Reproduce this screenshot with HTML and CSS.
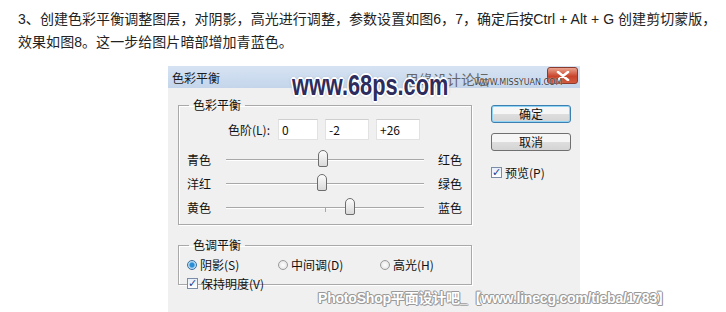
FILE: index.html
```html
<!DOCTYPE html>
<html lang="zh">
<head>
<meta charset="utf-8">
<link rel="stylesheet" href="styles.css">
</head>
<body>
<p class="intro">3、创建色彩平衡调整图层，对阴影，高光进行调整，参数设置如图6，7，确定后按Ctrl + Alt + G 创建剪切蒙版，<br>效果如图8。这一步给图片暗部增加青蓝色。</p>
<div class="dialog">
  <div class="titlebar">
    <span class="title">色彩平衡</span>
    <span class="close"><svg width="14" height="10" viewBox="0 0 14 10"><path d="M2 1 L12 9 M12 1 L2 9" stroke="#fff" stroke-width="2.6" stroke-linecap="round"/></svg></span>
    <span class="wmcn">思缘设计论坛</span>
    <span class="wm68">www.68ps.com</span>
    <span class="wmen">WWW.MISSYUAN.COM</span>
  </div>
  <div class="body">
    <div class="groups">
      <fieldset class="group g1">
        <legend>色彩平衡</legend>
        <div class="levels">
          <span class="lvlabel">色阶(L):</span>
          <span class="field f1">0</span>
          <span class="field f2">-2</span>
          <span class="field f2">+26</span>
        </div>
        <div class="slider">
          <span class="sl-left">青色</span>
          <span class="track"><span class="thumb" style="left:92px"></span></span>
          <span class="sl-right">红色</span>
        </div>
        <div class="slider">
          <span class="sl-left">洋红</span>
          <span class="track"><span class="thumb" style="left:91px"></span></span>
          <span class="sl-right">绿色</span>
        </div>
        <div class="slider">
          <span class="sl-left">黄色</span>
          <span class="track"><span class="tick"></span><span class="thumb" style="left:119px"></span></span>
          <span class="sl-right">蓝色</span>
        </div>
      </fieldset>
      <fieldset class="group g2">
        <legend>色调平衡</legend>
        <div class="radios">
          <span class="opt o1"><span class="radio on"></span>阴影(S)</span>
          <span class="opt o2"><span class="radio"></span>中间调(D)</span>
          <span class="opt o3"><span class="radio"></span>高光(H)</span>
        </div>
        <div class="opt keep"><span class="check">✓</span>保持明度(V)</div>
      </fieldset>
    </div>
    <div class="side">
      <span class="btn ok">确定</span>
      <span class="btn">取消</span>
      <span class="opt preview"><span class="check">✓</span>预览(P)</span>
    </div>
  </div>
  <span class="wmbottom">PhotoShop平面设计吧_【www.linecg.com/tieba/1783】</span>
</div>
</body>
</html>
```
FILE: styles.css
```css
html, body {
  margin: 0;
  padding: 0;
  background: #fff;
  overflow: hidden;
}
body {
  font-family: "Liberation Sans", "Noto Sans CJK SC", sans-serif;
  width: 726px;
  height: 312px;
}
.intro {
  margin: 0;
  padding: 8px 0 0 18px;
  font-size: 14px;
  line-height: 23px;
  color: #222;
  letter-spacing: 0.05px;
}
.dialog {
  position: relative;
  margin: 12px 0 0 168px;
  width: 412px;
  height: 246px;
  background: #f0f0f0;
  font-family: "Noto Sans CJK SC", sans-serif;
  font-size: 12px;
  color: #111;
}
.titlebar {
  position: relative;
  height: 22px;
  background: linear-gradient(#d6e3f3, #c4d5eb);
  display: flex;
  align-items: center;
}
.title {
  padding-left: 4px;
  font-size: 12px;
  color: #1a1a1a;
}
.close {
  position: absolute;
  z-index: 1;
  left: 379px;
  top: 1px;
  width: 31px;
  height: 17px;
  border: 1px solid #8a3b2e;
  border-radius: 3px;
  background: linear-gradient(#eaa490, #c8442c 55%, #d25a3e);
  box-sizing: border-box;
  display: flex;
  align-items: center;
  justify-content: center;
}
.wm68 {
  position: absolute;
  z-index: 2;
  left: 124px;
  top: 3px;
  font-family: "Liberation Sans", sans-serif;
  font-weight: bold;
  font-size: 29px;
  transform: scaleX(0.75);
  transform-origin: left center;
  color: #2d2c5c;
  white-space: nowrap;
  text-shadow: 0 0 2px #fff, 1px 1px 0 #fff, -1px -1px 0 #fff, 1px -1px 0 #fff, -1px 1px 0 #fff, 2px 0 0 #fff, -2px 0 0 #fff, 0 2px 0 #fff, 0 -2px 0 #fff, 0 0 4px #888;
  line-height: 32px;
}
.wmcn {
  position: absolute;
  z-index: 1;
  left: 237px;
  top: 3px;
  font-size: 14px;
  color: #666;
  white-space: nowrap;
}
.wmen {
  position: absolute;
  z-index: 3;
  left: 306px;
  top: 12px;
  font-family: "DejaVu Sans", sans-serif;
  font-size: 8px;
  line-height: 9px;
  color: #3a3a3a;
  white-space: nowrap;
  text-shadow: 0 0 1px #fff;
}
.body {
  display: flex;
  padding: 9px 0 0 10px;
}
.groups {
  display: flex;
  flex-direction: column;
  gap: 12px;
  width: 294px;
}
.group {
  margin: 0;
  border: 1px solid #a9a9a9;
  box-shadow: inset 1px 1px 0 #fff, 1px 1px 0 #fff;
  padding: 0;
  min-width: 0;
}
.group legend {
  margin-left: 10px;
  padding: 0 4px;
  font-size: 12px;
  line-height: 16px;
}
.g1 {
  height: 128px;
  box-sizing: border-box;
}
.levels {
  display: flex;
  align-items: center;
  margin: 6px 0 0 49px;
  gap: 7px;
}
.lvlabel {
  margin-right: 1px;
}
.field {
  height: 21px;
  box-sizing: border-box;
  background: #fff;
  border: 1px solid #e2e2e2;
  border-top-color: #cfcfcf;
  padding-left: 3px;
  line-height: 19px;
}
.f1 { width: 40px; }
.f2 { width: 44px; }
.slider {
  display: flex;
  align-items: center;
  height: 24px;
  margin-left: 8px;
}
.levels + .slider { margin-top: 7px; }
.sl-left { width: 39px; }
.sl-right { margin-left: 14px; }
.track {
  position: relative;
  width: 198px;
  height: 1px;
  background: #a8a8a8;
  box-shadow: 0 1px 0 #fff;
}
.tick {
  position: absolute;
  left: 99px;
  top: 1px;
  width: 1px;
  height: 4px;
  background: #a8a8a8;
}
.thumb {
  position: absolute;
  top: -9px;
  width: 10px;
  height: 17px;
  box-sizing: border-box;
  border: 1px solid #6d6d6d;
  border-radius: 5px 5px 2px 2px;
  background: linear-gradient(#fdfdfd, #d9d9d9);
}
.g2 {
  height: 48px;
  box-sizing: border-box;
}
.radios {
  display: flex;
  margin: 2px 0 0 8px;
  height: 19px;
  align-items: center;
}
.opt {
  display: flex;
  align-items: center;
  gap: 3px;
}
.o1 { width: 91px; }
.o2 { width: 102px; }
.radio {
  width: 10px;
  height: 10px;
  border-radius: 50%;
  border: 1px solid #9a9a9a;
  background: radial-gradient(#fff, #ddd);
  box-sizing: border-box;
}
.radio.on {
  border-color: #3a6e9c;
  background: radial-gradient(circle, #2a8ed6 0 2px, #9fd0f0 3px, #e8f4fc 5px);
}
.keep {
  margin: 0 0 0 8px;
  height: 19px;
}
.check {
  width: 11px;
  height: 11px;
  box-sizing: border-box;
  border: 1px solid #7a8ca6;
  background: linear-gradient(#e6eef8, #fff);
  color: #1d3f8f;
  font-size: 11px;
  font-weight: bold;
  line-height: 9px;
  text-align: center;
  font-family: "DejaVu Sans", sans-serif;
}
.side {
  display: flex;
  flex-direction: column;
  margin-left: 19px;
  padding-top: 8px;
}
.btn {
  width: 80px;
  height: 18px;
  box-sizing: border-box;
  border: 1px solid #707070;
  border-radius: 3px;
  background: linear-gradient(#f6f6f6 50%, #dedede 50%, #d4d4d4);
  text-align: center;
  line-height: 16px;
  font-size: 12px;
  margin-bottom: 10px;
}
.btn.ok {
  border-color: #3c7fb1;
  box-shadow: inset 0 0 0 1px #8fd3f5;
}
.preview {
  margin-top: 3px;
}
.wmbottom {
  position: absolute;
  left: 150px;
  top: 221px;
  font-family: "Liberation Sans", "Noto Sans CJK SC", sans-serif;
  font-weight: bold;
  font-size: 14px;
  letter-spacing: -0.2px;
  color: #fff;
  white-space: nowrap;
  text-shadow: 1px 0 0 #999, -1px 0 0 #999, 0 1px 0 #999, 0 -1px 0 #999, 1px 1px 0 #aaa, -1px -1px 0 #aaa;
}
```
